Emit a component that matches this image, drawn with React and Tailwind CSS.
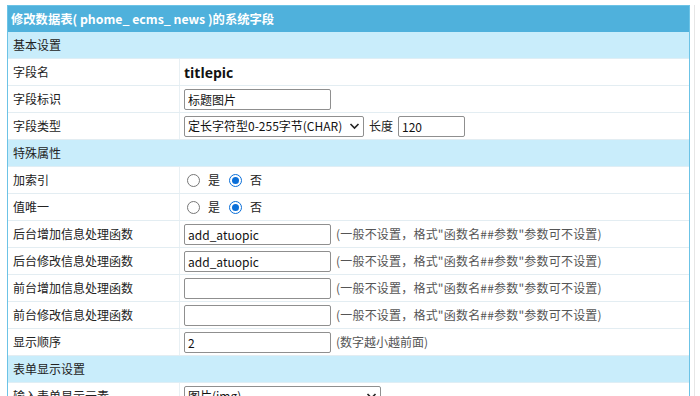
import React from "react";

const font = { fontFamily: '"Noto Sans CJK SC", "Noto Sans", sans-serif' };

function Section({ title }) {
  return (
    <div className="h-[27px] flex items-center pl-[5px] bg-[#c9edfb] border-b border-[#dfeef5] text-[12px] text-[#222]">
      {title}
    </div>
  );
}

function Row({ label, children }) {
  return (
    <div className="grid grid-cols-[172px_1fr] h-[27px] border-b border-[#e3edf2] text-[12px] text-[#222]">
      <div className="flex items-center pl-[5px] border-r border-[#e8f0f4]">{label}</div>
      <div className="flex items-center pl-[4px] gap-[5px]">{children}</div>
    </div>
  );
}

function TextInput({ value, w = "w-[147px]" }) {
  return (
    <input
      defaultValue={value}
      className={`${w} h-[21px] border border-[#8f8f8f] rounded-[2px] px-[3px] text-[12px] text-[#111] bg-white outline-none`}
      style={font}
    />
  );
}

function Select({ value, w }) {
  return (
    <div className={`${w} h-[21px] border border-[#8f8f8f] rounded-[2px] flex items-center justify-between pl-[3px] pr-[3px] bg-white`}>
      <span className="whitespace-nowrap text-[12px] text-[#111]">{value}</span>
      <svg width="11" height="8" viewBox="0 0 11 8">
        <path d="M1.5 2 L5.5 6 L9.5 2" fill="none" stroke="#222" strokeWidth="1.6" />
      </svg>
    </div>
  );
}

function Radio({ checked, label }) {
  return (
    <span className="flex items-center gap-[8px] mr-[9px]">
      {checked ? (
        <span className="w-[13px] h-[13px] rounded-full border-[1.5px] border-[#0b6fd8] flex items-center justify-center">
          <span className="w-[7px] h-[7px] rounded-full bg-[#0b6fd8]" />
        </span>
      ) : (
        <span className="w-[13px] h-[13px] rounded-full border border-[#777] bg-white" />
      )}
      <span>{label}</span>
    </span>
  );
}

const hint = "(一般不设置，格式\"函数名##参数\"参数可不设置)";

export default function App() {
  return (
    <div className="w-[700px] h-[396px] overflow-hidden bg-white pt-[5px] pl-[7px] flex" style={font}>
      <div className="w-[683px] shrink-0 border border-[#6cc3e6] border-b-0">
        <div className="h-[26px] flex items-center pl-[3px] bg-[#4fb1dc] text-white font-bold text-[12.3px]">
          修改数据表( phome_ ecms_ news )的系统字段
        </div>
        <Section title="基本设置" />
        <Row label="字段名">
          <span className="font-bold text-[14px] text-[#111]" style={{ fontFamily: '"Open Sans", "Noto Sans", sans-serif' }}>titlepic</span>
        </Row>
        <Row label="字段标识">
          <TextInput value="标题图片" />
        </Row>
        <Row label="字段类型">
          <Select value="定长字符型0-255字节(CHAR)" w="w-[180px]" />
          <span>长度</span>
          <TextInput value="120" w="w-[67px]" />
        </Row>
        <Section title="特殊属性" />
        <Row label="加索引">
          <span className="flex items-center pl-[3px]">
            <Radio label="是" />
            <Radio checked label="否" />
          </span>
        </Row>
        <Row label="值唯一">
          <span className="flex items-center pl-[3px]">
            <Radio label="是" />
            <Radio checked label="否" />
          </span>
        </Row>
        <Row label="后台增加信息处理函数">
          <TextInput value="add_atuopic" />
          <span className="text-[#555] tracking-[0.2px]">{hint}</span>
        </Row>
        <Row label="后台修改信息处理函数">
          <TextInput value="add_atuopic" />
          <span className="text-[#555] tracking-[0.2px]">{hint}</span>
        </Row>
        <Row label="前台增加信息处理函数">
          <TextInput value="" />
          <span className="text-[#555] tracking-[0.2px]">{hint}</span>
        </Row>
        <Row label="前台修改信息处理函数">
          <TextInput value="" />
          <span className="text-[#555] tracking-[0.2px]">{hint}</span>
        </Row>
        <Row label="显示顺序">
          <TextInput value="2" />
          <span className="text-[#555]">(数字越小越前面)</span>
        </Row>
        <Section title="表单显示设置" />
        <Row label="输入表单显示元素">
          <Select value="图片(img)" w="w-[197px]" />
        </Row>
      </div>
      <div className="ml-[4px] w-px bg-[#e6e6e6]" />
    </div>
  );
}
